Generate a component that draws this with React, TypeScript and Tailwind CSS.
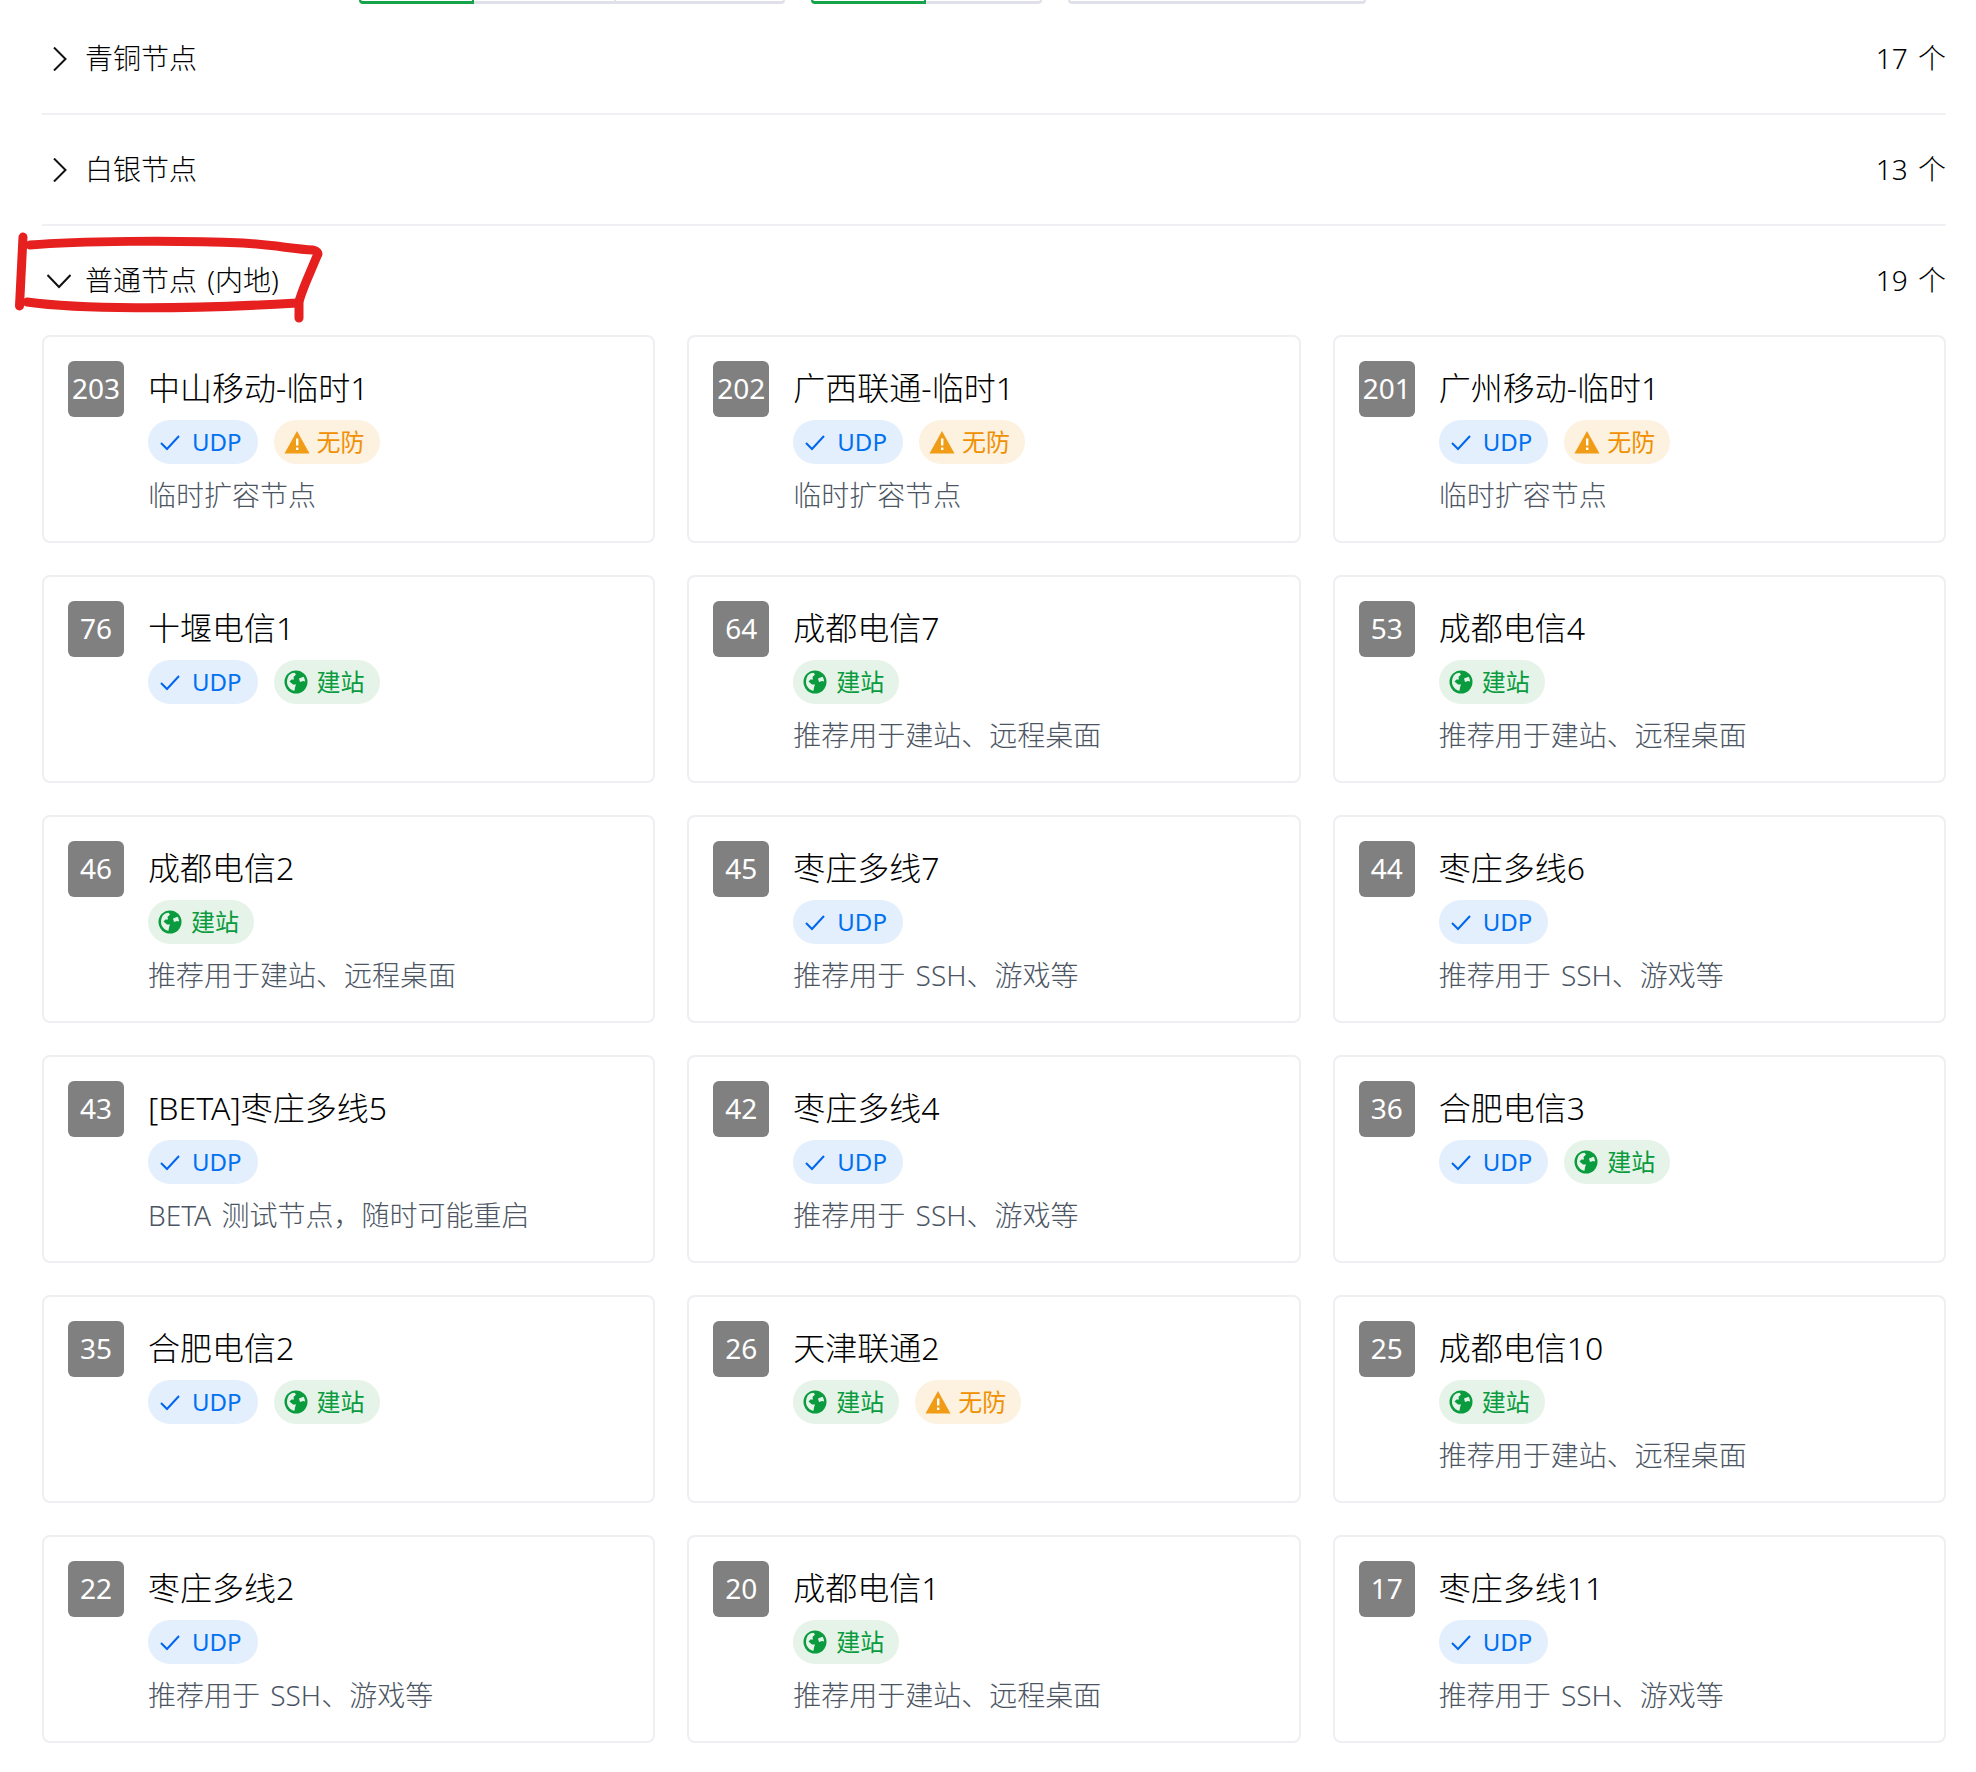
import type { ReactNode } from "react"

type Tag = "udp" | "site" | "open"

type NodeInfo = {
  id: number
  name: string
  tags: Tag[]
  desc?: string
}

const SITE_DESC = "推荐用于建站、远程桌面"
const SSH_DESC = "推荐用于 SSH、游戏等"

const nodes: NodeInfo[] = [
  { id: 203, name: "中山移动-临时1", tags: ["udp", "open"], desc: "临时扩容节点" },
  { id: 202, name: "广西联通-临时1", tags: ["udp", "open"], desc: "临时扩容节点" },
  { id: 201, name: "广州移动-临时1", tags: ["udp", "open"], desc: "临时扩容节点" },
  { id: 76, name: "十堰电信1", tags: ["udp", "site"] },
  { id: 64, name: "成都电信7", tags: ["site"], desc: SITE_DESC },
  { id: 53, name: "成都电信4", tags: ["site"], desc: SITE_DESC },
  { id: 46, name: "成都电信2", tags: ["site"], desc: SITE_DESC },
  { id: 45, name: "枣庄多线7", tags: ["udp"], desc: SSH_DESC },
  { id: 44, name: "枣庄多线6", tags: ["udp"], desc: SSH_DESC },
  { id: 43, name: "[BETA]枣庄多线5", tags: ["udp"], desc: "BETA 测试节点，随时可能重启" },
  { id: 42, name: "枣庄多线4", tags: ["udp"], desc: SSH_DESC },
  { id: 36, name: "合肥电信3", tags: ["udp", "site"] },
  { id: 35, name: "合肥电信2", tags: ["udp", "site"] },
  { id: 26, name: "天津联通2", tags: ["site", "open"] },
  { id: 25, name: "成都电信10", tags: ["site"], desc: SITE_DESC },
  { id: 22, name: "枣庄多线2", tags: ["udp"], desc: SSH_DESC },
  { id: 20, name: "成都电信1", tags: ["site"], desc: SITE_DESC },
  { id: 17, name: "枣庄多线11", tags: ["udp"], desc: SSH_DESC },
]

function CheckIcon() {
  return (
    <svg width="20" height="20" viewBox="0 0 20 20" fill="none" stroke="#0066ee" strokeWidth="2">
      <path d="M1 11l6 6L19 4" />
    </svg>
  )
}

function WarnIcon() {
  return (
    <svg width="26" height="24" viewBox="0 0 26 24">
      <path d="M13 1L25.500 23.500H.5z" fill="#f09c17" />
      <path d="M12 8.500h2.400v7H12zM12 17.500h2.400V20H12z" fill="#fff" />
    </svg>
  )
}

function GlobeIcon() {
  return (
    <svg width="24" height="24" viewBox="0 0 24 24">
      <circle cx="12" cy="12" r="11.500" fill="#0a9b3e" />
      <path
        d="M4.800 5.500C6 4 8.500 2.800 10.500 2.800L12 4.500 9.500 7 10 9.500 7.500 9.500 5.500 11.500 9 14.500 12 14.500 11 17.500 10.500 20.800C6.500 20.200 3 16.500 3 12 3 9.500 3.700 7.200 4.800 5.500zM15 8.500L19.500 6.800C20.500 8.200 21 10 21 11.500L19 11 16 12z"
        fill="#e5f3e9"
      />
    </svg>
  )
}

function Pill({ tag }: { tag: Tag }) {
  if (tag === "udp") {
    return (
      <span className="flex h-11 items-center gap-3 rounded-full bg-[#e3effd] pl-3 pr-4 text-2xl font-normal text-[#0070f0]">
        <CheckIcon />
        UDP
      </span>
    )
  }
  if (tag === "site") {
    return (
      <span className="flex h-11 items-center gap-[9px] rounded-full bg-[#e5f3e9] pl-[10px] pr-[15px] text-2xl font-normal text-[#0a9b3e]">
        <GlobeIcon />
        建站
      </span>
    )
  }
  return (
    <span className="flex h-11 items-center gap-[7px] rounded-full bg-[#fdf1e0] pl-[10px] pr-[15px] text-2xl font-normal text-[#f09000]">
      <WarnIcon />
      无防
    </span>
  )
}

function NodeCard({ node }: { node: NodeInfo }) {
  return (
    <div className="flex h-[208px] gap-6 rounded-lg border-2 border-[#eeeef3] p-6">
      <div className="flex h-14 w-14 shrink-0 items-center justify-center rounded-md bg-[#808080] pb-[3px] text-[28px] font-normal text-white">
        {node.id}
      </div>
      <div className="min-w-0">
        <div className="h-14 text-[32px] leading-[53px] text-black">{node.name}</div>
        <div className="mt-[3px] flex gap-4">
          {node.tags.map((t) => (
            <Pill key={t} tag={t} />
          ))}
        </div>
        {node.desc && <div className="mt-[11px] text-[28px] leading-10 text-[#4b5563]">{node.desc}</div>}
      </div>
    </div>
  )
}

function GroupRow({ open, title, count, children }: { open?: boolean; title: string; count: number; children?: ReactNode }) {
  return (
    <div className={open ? "" : "border-b-2 border-[#f0f0f4]"}>
      <div className="flex h-[109px] items-center text-[28px] text-black">
        <svg width="24" height="24" viewBox="0 0 24 24" fill="none" stroke="#111" strokeWidth="2" className="ml-[5px] mr-[14px]">
          {open ? <path d="M.5 6L12 18 23.500 6" /> : <path d="M7 .5L18.500 12 7 23.500" />}
        </svg>
        <span className="mb-[2px]">{title}</span>
        <span className="mb-[2px] ml-auto">{count} 个</span>
      </div>
      {children}
    </div>
  )
}

export default function App() {
  return (
    <div className="relative min-h-[1772px] bg-white font-['Noto_Sans','Noto_Sans_CJK_SC',sans-serif] font-light [word-spacing:3px]">
      <div className="flex h-1 items-end overflow-hidden pl-[359px]">
        <div className="h-1 w-[115px] rounded-bl-lg border-x-2 border-b-[3px] border-[#16a34a]" />
        <div className="h-1 w-[142px] border-b-[3px] border-r-2 border-[#e0e0e8]" />
        <div className="h-1 w-[169px] rounded-br-lg border-b-[3px] border-r-2 border-[#e0e0e8]" />
        <div className="ml-[26px] h-1 w-[115px] rounded-bl-lg border-x-2 border-b-[3px] border-[#16a34a]" />
        <div className="h-1 w-[116px] rounded-br-lg border-b-[3px] border-r-2 border-[#e0e0e8]" />
        <div className="ml-[26px] h-1 w-[298px] rounded-b-lg border-x-2 border-b-[3px] border-[#e0e0e8]" />
      </div>
      <div className="ml-[42px] mr-[30px]">
        <GroupRow title="青铜节点" count={17} />
        <GroupRow title="白银节点" count={13} />
        <GroupRow open title="普通节点 (内地)" count={19}>
          <div className="grid grid-cols-3 gap-8">
            {nodes.map((n) => (
              <NodeCard key={n.id} node={n} />
            ))}
          </div>
        </GroupRow>
      </div>
      {/* hand drawn marker around the open group */}
      <svg width="320" height="110" viewBox="0 0 320 110" fill="none" stroke="#e61f1f" strokeWidth="9" strokeLinecap="round" strokeLinejoin="round" className="absolute left-[10px] top-[225px]">
        <path d="M13 12L9.500 81" />
        <path d="M20 20C67 16 167 15 233 18C265 20 283 24 303 25Q310 27 307 31L296 57Q290 72 289 77L289 93" />
        <path d="M17 77C67 84 167 85 287 78" />
      </svg>
    </div>
  )
}
